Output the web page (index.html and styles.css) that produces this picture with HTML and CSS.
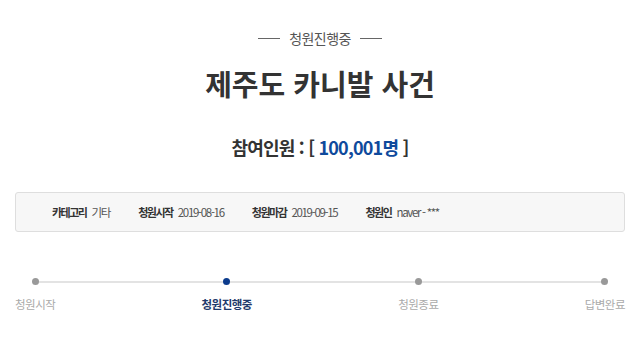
FILE: index.html
```html
<!DOCTYPE html>
<html lang="ko">
<head>
    <meta charset="UTF-8">
    <meta name="viewport" content="width=device-width, initial-scale=1.0">
    <title>제주도 카니발 사건</title>
    <link rel="stylesheet" href="styles.css">
</head>
<body>
    <div class="petition">
        <div class="status-tag">청원진행중</div>
        <h1 class="title">제주도 카니발 사건</h1>
        <div class="count">참여인원 : [ <span class="num">100,001명</span> ]</div>

        <ul class="info">
            <li><b>카테고리</b> <span class="val">기타</span></li>
            <li><b>청원시작</b> <span class="val">2019-08-16</span></li>
            <li><b>청원마감</b> <span class="val">2019-09-15</span></li>
            <li><b>청원인</b> <span class="val">naver - ***</span></li>
        </ul>

        <div class="steps">
            <div class="step">
                <span class="dot"></span>
                <span class="label">청원시작</span>
            </div>
            <div class="step active">
                <span class="dot"></span>
                <span class="label">청원진행중</span>
            </div>
            <div class="step">
                <span class="dot"></span>
                <span class="label">청원종료</span>
            </div>
            <div class="step">
                <span class="dot"></span>
                <span class="label">답변완료</span>
            </div>
        </div>
    </div>
</body>
</html>
```

FILE: styles.css
```css
body {
    margin: 0;
    background: #fff;
    font-family: "Noto Sans CJK KR", "Noto Sans", sans-serif;
    color: #333;
}
.petition {
    width: 610px;
    margin: 0 auto;
    padding-top: 27px;
}
.status-tag {
    display: flex;
    align-items: center;
    justify-content: center;
    gap: 9px;
    font-size: 14px;
    line-height: 22px;
    letter-spacing: -0.6px;
    color: #555;
}
.status-tag::before, .status-tag::after {
    content: "";
    width: 22px;
    height: 1px;
    background: #666;
}
.title {
    margin: 14px 0 0;
    text-align: center;
    font-size: 29px;
    line-height: 40px;
    font-weight: bold;
    color: #333;
}
.count {
    margin-top: 30px;
    text-align: center;
    font-size: 18px;
    line-height: 28px;
    font-weight: bold;
    letter-spacing: -0.8px;
    color: #333;
}
.count .num {
    color: #0f4a9c;
}
.info {
    list-style: none;
    margin: 31px 0 0;
    padding: 0 0 0 36px;
    height: 38px;
    display: flex;
    align-items: center;
    gap: 28px;
    background: #f7f7f7;
    border: 1px solid #dedede;
    border-radius: 3px;
    font-size: 11px;
    color: #555;
}
.info b {
    color: #333;
    letter-spacing: -1.5px;
    margin-right: 2px;
}
.info .val {
    font-size: 11.5px;
    letter-spacing: -1.3px;
}
.steps {
    position: relative;
    margin-top: 42px;
    display: flex;
    justify-content: space-between;
}
.steps::before {
    content: "";
    position: absolute;
    left: 20px;
    right: 20px;
    top: 7px;
    height: 2px;
    background: #e3e3e3;
}
.step {
    position: relative;
    display: flex;
    flex-direction: column;
    align-items: center;
    gap: 10px;
}
.dot {
    width: 7px;
    height: 7px;
    margin-top: 4px;
    border-radius: 50%;
    background: #999;
}
.label {
    font-size: 11.5px;
    line-height: 18px;
    letter-spacing: -0.5px;
    color: #aaa;
}
.step.active .dot {
    background: #0b3b8c;
}
.step.active .label {
    color: #1f3a6b;
    font-weight: bold;
}
```
